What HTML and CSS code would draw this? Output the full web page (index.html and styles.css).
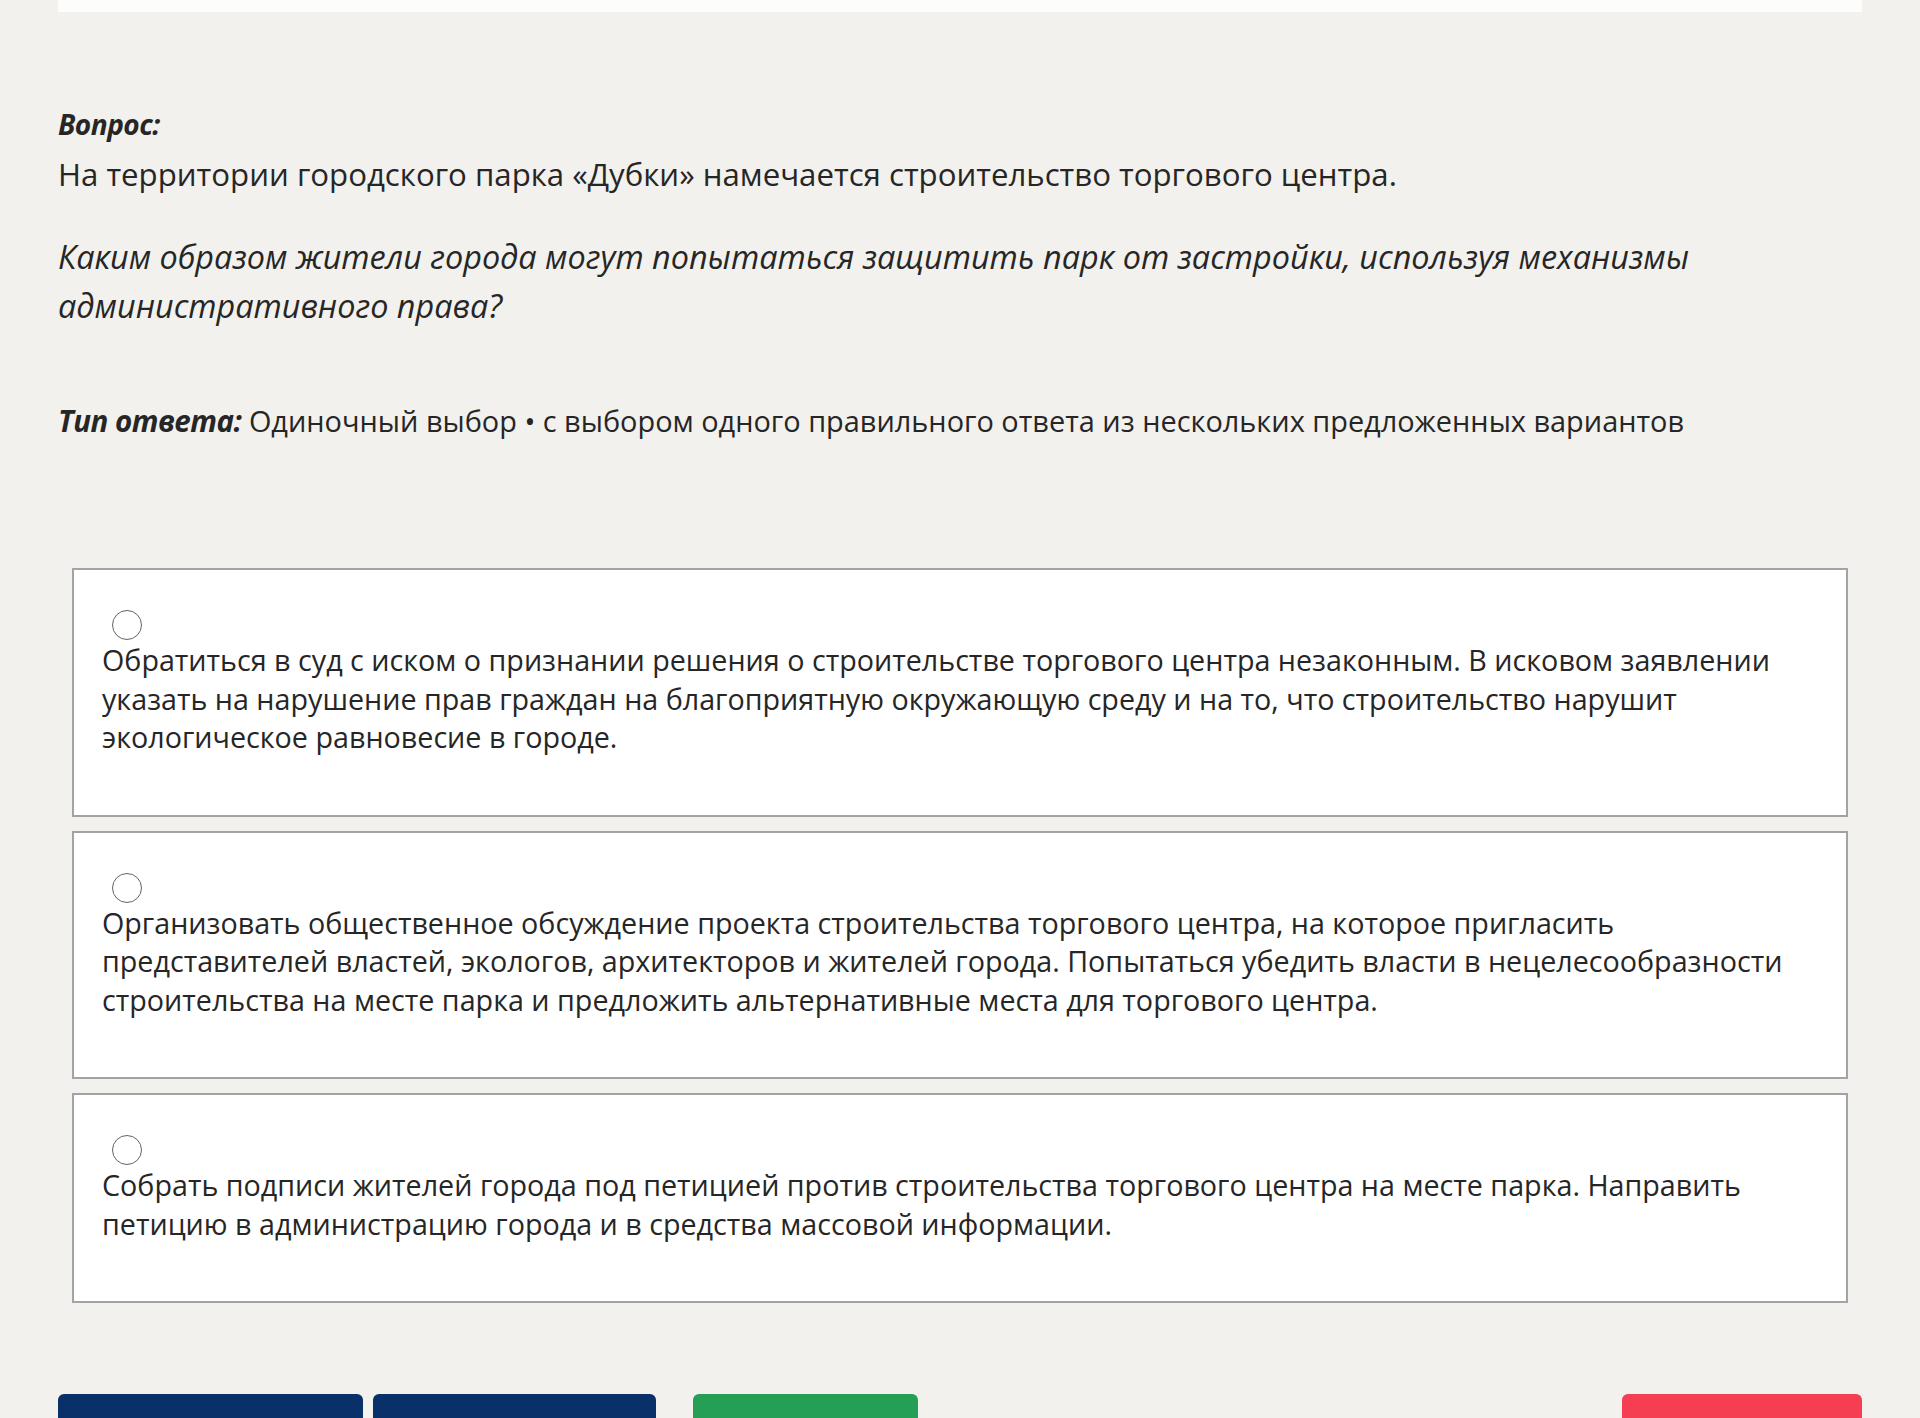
FILE: index.html
```html
<!doctype html>
<html lang="ru">
<head>
    <meta charset="UTF-8">
    <meta name="viewport" content="width=device-width, initial-scale=1">
    <title>Тест — административное право</title>
    <link rel="stylesheet" href="styles.css">
</head>
<body>
<div class="page">
    <div class="card-top"></div>

    <div class="question">
        <div class="q-label">Вопрос:</div>
        <p class="q-text">На территории городского парка «Дубки» намечается строительство торгового центра.</p>
        <p class="q-prompt">Каким образом жители города могут попытаться защитить парк от застройки, используя механизмы административного права?</p>
        <p class="answer-type"><b>Тип ответа:</b> Одиночный выбор • с выбором одного правильного ответа из нескольких предложенных вариантов</p>
    </div>

    <form class="options" id="answerForm">
        <label class="option">
            <input type="radio" name="answer" value="1">
            <span>Обратиться в суд с иском о признании решения о строительстве торгового центра незаконным. В исковом заявлении указать на нарушение прав граждан на благоприятную окружающую среду и на то, что строительство нарушит экологическое равновесие в городе.</span>
        </label>
        <label class="option">
            <input type="radio" name="answer" value="2">
            <span>Организовать общественное обсуждение проекта строительства торгового центра, на которое пригласить представителей властей, экологов, архитекторов и жителей города. Попытаться убедить власти в нецелесообразности строительства на месте парка и предложить альтернативные места для торгового центра.</span>
        </label>
        <label class="option">
            <input type="radio" name="answer" value="3">
            <span>Собрать подписи жителей города под петицией против строительства торгового центра на месте парка. Направить петицию в администрацию города и в средства массовой информации.</span>
        </label>
    </form>

    <div class="actions">
        <button type="button" class="btn btn-nav btn-prev">Предыдущий</button>
        <button type="button" class="btn btn-nav btn-skip">Пропустить</button>
        <button type="button" class="btn btn-answer">Ответить</button>
        <button type="button" class="btn btn-finish">Завершить</button>
    </div>
</div>
</body>
</html>
```

FILE: styles.css
```css
body {
    margin: 0;
    background: #f2f1ed;
    color: #262626;
    font-family: 'Open Sans', 'Noto Sans', sans-serif;
}
.page {
    padding: 0 58px;
}
.card-top {
    height: 12px;
    background: #fdfdfb;
}
.question {
    margin-top: 92px;
}
.q-label {
    font-size: 28px;
    line-height: 40px;
    font-weight: bold;
    font-style: italic;
    letter-spacing: -0.5px;
}
.q-text {
    margin: 6px 0 0;
    font-size: 31.2px;
    line-height: 49px;
}
.q-prompt {
    margin: 33px 0 0;
    font-size: 32.4px;
    line-height: 49px;
    font-style: italic;
}
.answer-type {
    margin: 66px 0 0;
    font-size: 28.9px;
    line-height: 49px;
}
.answer-type b {
    font-size: 29.5px;
    font-style: italic;
    letter-spacing: -0.5px;
}
.options {
    margin: 123px 14px 0;
    display: flex;
    flex-direction: column;
    gap: 14px;
}
.option {
    display: block;
    background: #fff;
    border: 2px solid #a3a3a3;
    padding: 40px 28px 58px;
    font-size: 28.7px;
    line-height: 38.5px;
    cursor: pointer;
}
.option input {
    appearance: none;
    display: block;
    width: 30px;
    height: 30px;
    margin: 0 0 1px 10px;
    border: 1.5px solid #636363;
    border-radius: 50%;
    background: #fff;
    cursor: pointer;
}
.option input:checked {
    box-shadow: inset 0 0 0 6px #fff;
    background: #0a3069;
}
.actions {
    margin-top: 91px;
    display: flex;
    gap: 10px;
}
.btn {
    border: none;
    border-radius: 6px;
    color: #fff;
    font-family: inherit;
    font-size: 27.5px;
    line-height: 38px;
    padding: 16px 0;
    cursor: pointer;
}
.btn-nav {
    background: #0a3069;
}
.btn-prev {
    width: 305px;
}
.btn-skip {
    width: 283px;
}
.btn-answer {
    width: 225px;
    margin-left: 27px;
    background: #249f55;
}
.btn-finish {
    width: 240px;
    margin-left: auto;
    background: #f53e51;
}
```
